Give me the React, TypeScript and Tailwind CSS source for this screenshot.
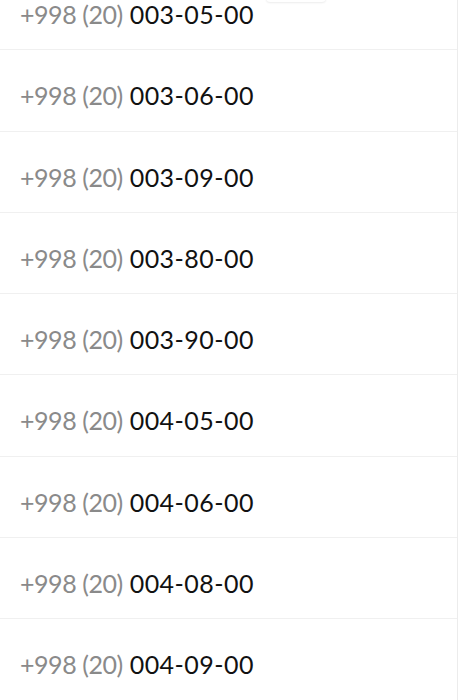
const numbers = [
  "003-05-00",
  "003-06-00",
  "003-09-00",
  "003-80-00",
  "003-90-00",
  "004-05-00",
  "004-06-00",
  "004-08-00",
  "004-09-00",
];

export default function App() {
  return (
    <div className="relative h-[700px] w-[459px] overflow-hidden bg-white font-['Lato',sans-serif]">
      <div className="absolute left-[266px] top-[-6px] h-[8px] w-[60px] rounded-b-sm bg-white shadow-[0_1px_2px_rgba(0,0,0,0.08)]" />
      <ul className="mt-[-31px] w-[458px] border-r border-[#ececec]">
        {numbers.map((n) => (
          <li
            key={n}
            className="flex h-[81.29px] items-start border-b border-[#f0f0f0] pl-5 pt-[30px] text-[25px] leading-[30px]"
          >
            <span className="tracking-[-0.45px] text-[#8a8a8a]">+998 (20)</span>
            <span className="ml-[7px] tracking-[0.45px] text-[#111]">{n}</span>
          </li>
        ))}
      </ul>
    </div>
  );
}
